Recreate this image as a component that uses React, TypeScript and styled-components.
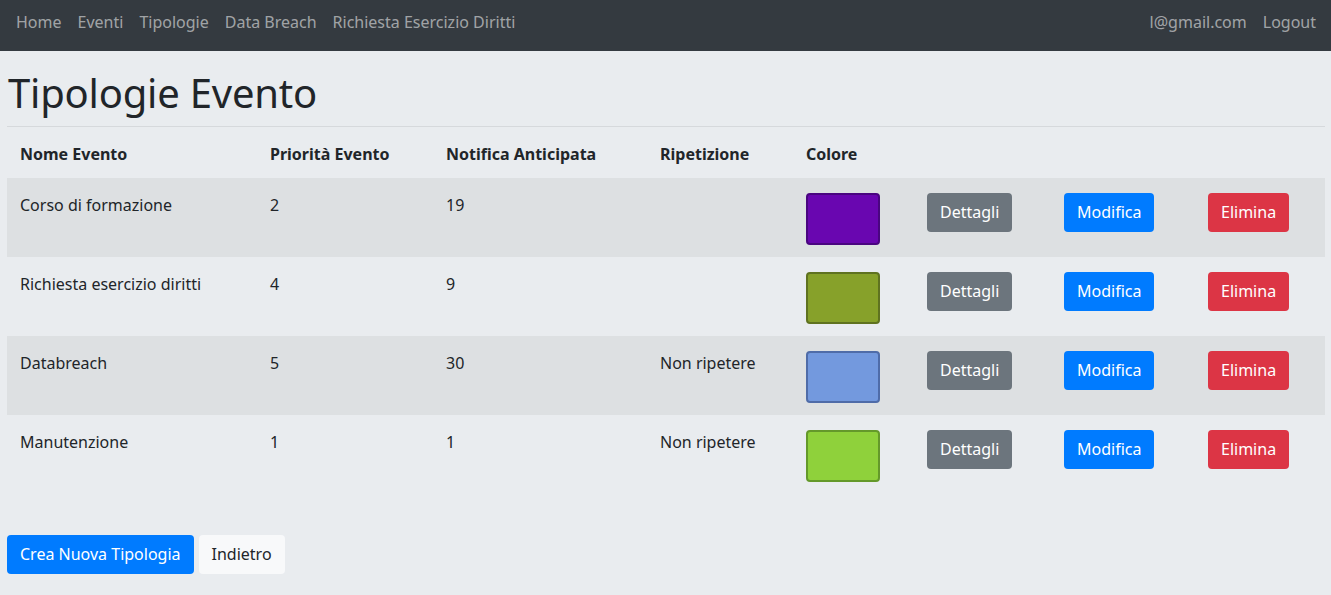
import React from "react";
import styled, { createGlobalStyle } from "styled-components";

const GlobalStyle = createGlobalStyle`
  html, body {
    margin: 0;
    padding: 0;
    background: #e9ecef;
    color: #212529;
    font-family: "Noto Sans", "Open Sans", sans-serif;
    font-size: 16px;
    line-height: 24px;
  }
  * { box-sizing: border-box; }
`;

const Navbar = styled.nav`
  height: 51px;
  background: #343a40;
  display: flex;
  justify-content: space-between;
  align-items: flex-start;
  padding: 10px 7px 0 8px;
`;

const NavGroup = styled.div`
  display: flex;
  align-items: center;
`;

const NavLink = styled.a`
  color: rgba(255, 255, 255, 0.55);
  text-decoration: none;
  padding: 0 8px;
  font-size: 16px;
  line-height: 24px;
  white-space: nowrap;
  cursor: pointer;
`;

const Main = styled.main`
  padding: 0 6px 0 7px;
`;

const Title = styled.h1`
  margin: 18px 0 0;
  font-size: 40px;
  line-height: 48px;
  font-weight: 400;
  letter-spacing: -0.2px;
  padding-left: 1px;
  padding-bottom: 9px;
  border-bottom: 1px solid rgba(0, 0, 0, 0.08);
`;

const Grid = styled.div`
  display: grid;
  grid-template-columns: 250px 176px 214px 146px 121px 137px 144px 1fr;
`;

const HeadCell = styled.div`
  font-weight: 700;
  padding: 15px 12px 12px 13px;
  line-height: 24px;
`;

const Cell = styled.div<{ $striped: boolean }>`
  background: ${(p) => (p.$striped ? "rgba(0, 0, 0, 0.05)" : "transparent")};
  padding: 15px 12px 12px 13px;
  min-height: 79px;
  line-height: 24px;
`;

const Swatch = styled.div<{ $color: string; $edge: string }>`
  width: 74px;
  height: 52px;
  border-radius: 4px;
  background: ${(p) => p.$color};
  border: 2px solid ${(p) => p.$edge};
`;

const variants: Record<string, { bg: string; fg: string }> = {
  secondary: { bg: "#6c757d", fg: "#ffffff" },
  primary: { bg: "#007bff", fg: "#ffffff" },
  danger: { bg: "#dc3545", fg: "#ffffff" },
  light: { bg: "#f8f9fa", fg: "#212529" },
};

const Button = styled.button<{ $variant: string }>`
  display: inline-block;
  font-family: inherit;
  font-size: 16px;
  line-height: 24px;
  padding: 7px 13px 8px;
  border: 0;
  border-radius: 4px;
  background: ${(p) => variants[p.$variant].bg};
  color: ${(p) => variants[p.$variant].fg};
  cursor: pointer;
  white-space: nowrap;
`;

const Footer = styled.div`
  display: flex;
  gap: 5px;
  margin-top: 41px;
`;

const rows = [
  { name: "Corso di formazione", prio: "2", notif: "19", rep: "", color: "#6906b0", edge: "#4a0580" },
  { name: "Richiesta esercizio diritti", prio: "4", notif: "9", rep: "", color: "#87a12a", edge: "#5f7220" },
  { name: "Databreach", prio: "5", notif: "30", rep: "Non ripetere", color: "#7399de", edge: "#4f6ca8" },
  { name: "Manutenzione", prio: "1", notif: "1", rep: "Non ripetere", color: "#8fd13b", edge: "#64992a" },
];

const headers = ["Nome Evento", "Priorità Evento", "Notifica Anticipata", "Ripetizione", "Colore", "", "", ""];

export default function App() {
  return (
    <>
      <GlobalStyle />
      <Navbar>
        <NavGroup>
          <NavLink>Home</NavLink>
          <NavLink>Eventi</NavLink>
          <NavLink>Tipologie</NavLink>
          <NavLink>Data Breach</NavLink>
          <NavLink>Richiesta Esercizio Diritti</NavLink>
        </NavGroup>
        <NavGroup>
          <NavLink>l@gmail.com</NavLink>
          <NavLink>Logout</NavLink>
        </NavGroup>
      </Navbar>
      <Main>
        <Title>Tipologie Evento</Title>
        <Grid>
          {headers.map((h, i) => (
            <HeadCell key={"h" + i}>{h}</HeadCell>
          ))}
          {rows.map((r, i) => {
            const s = i % 2 === 0;
            return (
              <React.Fragment key={r.name}>
                <Cell $striped={s}>{r.name}</Cell>
                <Cell $striped={s}>{r.prio}</Cell>
                <Cell $striped={s}>{r.notif}</Cell>
                <Cell $striped={s}>{r.rep}</Cell>
                <Cell $striped={s}>
                  <Swatch $color={r.color} $edge={r.edge} />
                </Cell>
                <Cell $striped={s}>
                  <Button $variant="secondary">Dettagli</Button>
                </Cell>
                <Cell $striped={s}>
                  <Button $variant="primary">Modifica</Button>
                </Cell>
                <Cell $striped={s}>
                  <Button $variant="danger">Elimina</Button>
                </Cell>
              </React.Fragment>
            );
          })}
        </Grid>
        <Footer>
          <Button $variant="primary">Crea Nuova Tipologia</Button>
          <Button $variant="light">Indietro</Button>
        </Footer>
      </Main>
    </>
  );
}
